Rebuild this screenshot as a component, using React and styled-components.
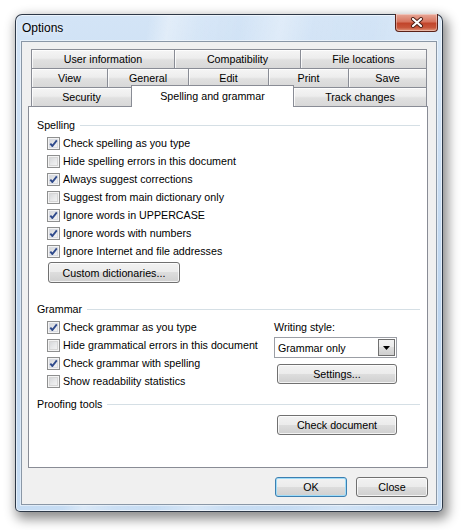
import React from 'react';
import styled, { createGlobalStyle } from 'styled-components';

/*
* Data.
*/

const TAB_ROWS = [
  [
    { label: 'User information', w: 144 },
    { label: 'Compatibility', w: 127 },
    { label: 'File locations', w: 127 },
  ],
  [
    { label: 'View', w: 77 },
    { label: 'General', w: 82 },
    { label: 'Edit', w: 81 },
    { label: 'Print', w: 81 },
    { label: 'Save', w: 79 },
  ],
  [
    { label: 'Security', w: 101 },
    { label: 'Spelling and grammar', w: 163, active: true },
    { label: 'Track changes', w: 134 },
  ],
];

const SPELLING = [
  { label: 'Check spelling as you type', checked: true },
  { label: 'Hide spelling errors in this document', checked: false },
  { label: 'Always suggest corrections', checked: true },
  { label: 'Suggest from main dictionary only', checked: false },
  { label: 'Ignore words in UPPERCASE', checked: true },
  { label: 'Ignore words with numbers', checked: true },
  { label: 'Ignore Internet and file addresses', checked: true },
];

const GRAMMAR = [
  { label: 'Check grammar as you type', checked: true },
  { label: 'Hide grammatical errors in this document', checked: false },
  { label: 'Check grammar with spelling', checked: true },
  { label: 'Show readability statistics', checked: false },
];


/*
* Small parts.
*/

function Check({ label, checked }) {
  return (
    <CheckRow>
      <CheckBox checked={checked}>
        {checked && (
          <svg width="11" height="11" viewBox="0 0 11 11">
            <path d="M2.3 5.6 L4.4 8 L8.8 2.4" fill="none" stroke="#2f4a8c" strokeWidth="1.9" strokeLinejoin="round" />
          </svg>
        )}
      </CheckBox>
      <span>{label}</span>
    </CheckRow>
  );
}

function Heading({ children }) {
  return (
    <StyledHeading>
      <span>{children}</span>
      <HeadingRule />
    </StyledHeading>
  );
}


/*
* App component definition.
*/

export default function App() {
  return (
    <>
      <GlobalStyle />
      <Page>
        <Window>
          <TitleBar>
            <Title>Options</Title>
            <CloseButton>
              <svg width="14" height="11" viewBox="0 0 14 11">
                <path d="M3 2 L11 9 M11 2 L3 9" stroke="#4a1d14" strokeWidth="4" strokeLinecap="round" />
                <path d="M3 2 L11 9 M11 2 L3 9" stroke="#fff" strokeWidth="2.2" strokeLinecap="round" />
              </svg>
            </CloseButton>
          </TitleBar>

          <Client>
            <TabStrip>
              {TAB_ROWS.map((row, i) => (
                <TabRow key={i}>
                  {row.map((tab) => (
                    <Tab key={tab.label} w={tab.w} active={tab.active}>
                      {tab.label}
                    </Tab>
                  ))}
                </TabRow>
              ))}
            </TabStrip>

            <Panel>
              <Heading>Spelling</Heading>
              <Indented>
                {SPELLING.map((item) => (
                  <Check key={item.label} {...item} />
                ))}
                <DictButton>Custom dictionaries...</DictButton>
              </Indented>

              <Section gap={18}>
                <Heading>Grammar</Heading>
                <GrammarGrid>
                  <div>
                    {GRAMMAR.map((item) => (
                      <Check key={item.label} {...item} />
                    ))}
                  </div>
                  <SideColumn>
                    <FieldLabel>Writing style:</FieldLabel>
                    <Select>
                      <SelectValue>Grammar only</SelectValue>
                      <SelectArrow>
                        <svg width="7" height="4" viewBox="0 0 7 4">
                          <path d="M0 0 H7 L3.5 4 Z" fill="#000" />
                        </svg>
                      </SelectArrow>
                    </Select>
                    <SideButton>Settings...</SideButton>
                  </SideColumn>
                </GrammarGrid>
              </Section>

              <Section gap={6}>
                <Heading>Proofing tools</Heading>
                <ProofingRow>
                  <SideButton>Check document</SideButton>
                </ProofingRow>
              </Section>
            </Panel>

            <Footer>
              <Button w={72} h={20} isDefault>OK</Button>
              <Button w={72} h={20}>Close</Button>
            </Footer>
          </Client>
        </Window>
      </Page>
    </>
  );
}


/*
* Styles
*/

const GlobalStyle = createGlobalStyle`
  html, body {
    margin: 0;
    background: #fff;
  }

  body {
    font-family: "Liberation Sans", Arial, sans-serif;
    font-size: 10.7px;
    color: #000;
  }
`;

const Page = styled.div`
  width: 462px;
  height: 530px;
  padding: 14px 0 0 15px;
  box-sizing: border-box;
`;

const Window = styled.div`
  width: 428px;
  height: 498px;
  box-sizing: border-box;
  display: flex;
  flex-direction: column;
  padding: 0 5px 6px 5px;
  border: 1px solid rgba(28, 38, 52, 0.9);
  border-radius: 7px 7px 5px 5px;
  background:
    linear-gradient(100deg,
      rgba(255, 255, 255, 0) 0%,
      rgba(255, 255, 255, 0) 26%,
      rgba(255, 255, 255, 0.35) 30%,
      rgba(255, 255, 255, 0.1) 36%,
      rgba(255, 255, 255, 0) 44%,
      rgba(255, 255, 255, 0.3) 52%,
      rgba(255, 255, 255, 0.05) 58%,
      rgba(255, 255, 255, 0) 70%,
      rgba(255, 255, 255, 0.2) 80%,
      rgba(255, 255, 255, 0) 90%),
    linear-gradient(#d3e4f6, #bdd5ef 60%, #c6dcf3);
  box-shadow:
    inset 0 0 0 1px rgba(255, 255, 255, 0.55),
    3px 5px 12px 2px rgba(0, 0, 0, 0.45);
`;

const TitleBar = styled.div`
  height: 26px;
  display: flex;
  align-items: center;
  justify-content: space-between;
`;

const Title = styled.div`
  margin-left: 1px;
  font-size: 12px;
  color: #000;
  text-shadow: 0 0 6px rgba(255, 255, 255, 0.9);
`;

const CloseButton = styled.div`
  align-self: flex-start;
  width: 43px;
  height: 18px;
  margin: -1px -1px 0 0;
  box-sizing: border-box;
  display: flex;
  align-items: center;
  justify-content: center;
  border: 1px solid #5a2118;
  border-top: none;
  border-radius: 0 0 4px 4px;
  background: linear-gradient(#e8a898 0%, #d7755f 45%, #c2452b 55%, #c8563b 80%, #e29a7f 100%);
  box-shadow: inset 0 0 0 1px rgba(255, 255, 255, 0.35);
`;

const Client = styled.div`
  flex: 1;
  display: flex;
  flex-direction: column;
  padding: 7px 8px 7px 6px;
  background: #f0f0f0;
  border: 1px solid #8a97a6;
  box-shadow: 0 0 0 1px rgba(255, 255, 255, 0.45);
`;

const TabStrip = styled.div`
  display: flex;
  flex-direction: column;
  padding-left: 3px;
`;

const TabRow = styled.div`
  display: flex;
  height: 19px;
`;

const Tab = styled.div`
  flex: 0 0 ${({ w }) => w}px;
  box-sizing: border-box;
  display: flex;
  align-items: center;
  justify-content: center;
  margin-left: -1px;
  border: 1px solid #898c95;
  border-bottom: none;
  white-space: nowrap;
  background: ${({ active }) => (active
    ? '#fff'
    : 'linear-gradient(#f5f5f5 0%, #ededed 45%, #e0e0e0 55%, #d8d8d8 100%)')};
  box-shadow: ${({ active }) => (active ? 'none' : 'inset 1px 1px 0 rgba(255, 255, 255, 0.8)')};
  height: ${({ active }) => (active ? '22px' : '19px')};
  margin-top: ${({ active }) => (active ? '-2px' : '0')};
  padding-bottom: ${({ active }) => (active ? '2px' : '0')};
  position: relative;
  z-index: ${({ active }) => (active ? 2 : 1)};

  &:first-child {
    margin-left: 0;
  }
`;

const Panel = styled.div`
  flex: 1;
  display: flex;
  flex-direction: column;
  padding: 10px 7px 0 8px;
  background: #fff;
  border: 1px solid #898c95;
`;

const StyledHeading = styled.div`
  height: 16px;
  display: flex;
  align-items: center;
  gap: 5px;
  margin-bottom: 1px;
`;

const HeadingRule = styled.div`
  flex: 1;
  height: 1px;
  background: #d5dfe5;
`;

const Indented = styled.div`
  display: flex;
  flex-direction: column;
  align-items: flex-start;
  padding-left: 10px;
`;

const Section = styled.div`
  margin-top: ${({ gap }) => gap}px;
`;

const CheckRow = styled.div`
  height: 18px;
  display: flex;
  align-items: center;
  gap: 3px;
  white-space: nowrap;
`;

const CheckBox = styled.span`
  flex: 0 0 13px;
  width: 13px;
  height: 13px;
  box-sizing: border-box;
  display: flex;
  align-items: center;
  justify-content: center;
  border: 1px solid #8e8f8f;
  background: linear-gradient(135deg, #cfd1d4 0%, #e8e9ea 55%, #f8f8f8 100%);
  box-shadow: inset 0 0 0 1px #f4f4f4, inset 0 0 0 2px ${({ checked }) => (checked ? '#d9dce3' : '#d6d6d6')};
`;

const GrammarGrid = styled.div`
  display: grid;
  grid-template-columns: 227px 123px;
  padding-left: 10px;
`;

const SideColumn = styled.div`
  display: flex;
  flex-direction: column;
`;

const FieldLabel = styled.div`
  height: 18px;
  display: flex;
  align-items: center;
`;

const Select = styled.div`
  height: 21px;
  margin-top: 1px;
  box-sizing: border-box;
  display: flex;
  align-items: stretch;
  border: 1px solid #9b9ea5;
  background: #fff;
`;

const SelectValue = styled.div`
  flex: 1;
  display: flex;
  align-items: center;
  padding-left: 3px;
`;

const SelectArrow = styled.div`
  width: 17px;
  margin: 1px;
  box-sizing: border-box;
  display: flex;
  align-items: center;
  justify-content: center;
  border: 1px solid #707070;
  background: linear-gradient(#f2f2f2 0%, #ebebeb 50%, #dddddd 50%, #cfcfcf 100%);
`;

const Button = styled.div`
  width: ${({ w }) => w}px;
  height: ${({ h }) => h}px;
  box-sizing: border-box;
  display: flex;
  align-items: center;
  justify-content: center;
  border: 1px solid ${({ isDefault }) => (isDefault ? '#3c7fb1' : '#707070')};
  border-radius: 3px;
  background: linear-gradient(#f2f2f2 0%, #ebebeb 50%, #dddddd 50%, #cfcfcf 100%);
  box-shadow: inset 0 0 0 1px ${({ isDefault }) => (isDefault ? '#9fdcf8' : 'rgba(255, 255, 255, 0.75)')};
  white-space: nowrap;
`;

const DictButton = styled(Button).attrs({ w: 132, h: 21 })`
  margin-top: 2px;
  margin-left: 1px;
`;

const SideButton = styled(Button).attrs({ w: 120, h: 20 })`
  margin-top: 6px;
  margin-left: 3px;
`;

const ProofingRow = styled.div`
  padding-left: 237px;

  & > ${SideButton} {
    margin-top: 3px;
  }
`;

const Footer = styled.div`
  display: flex;
  justify-content: flex-end;
  gap: 9px;
  margin-top: 9px;
`;
